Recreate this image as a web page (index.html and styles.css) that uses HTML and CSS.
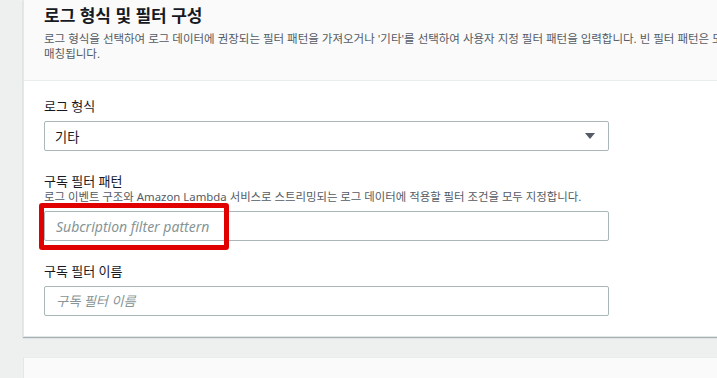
FILE: index.html
```html
<!DOCTYPE html>
<html lang="ko">
<head>
    <meta charset="UTF-8">
    <meta name="viewport" content="width=device-width, initial-scale=1.0">
    <title>로그 형식 및 필터 구성</title>
    <link rel="stylesheet" href="styles.css">
</head>
<body>
    <div class="page">
        <!-- 로그 형식 및 필터 구성 -->
        <div class="card">
            <div class="card-header">
                <h2>로그 형식 및 필터 구성</h2>
                <p class="desc">로그 형식을 선택하여 로그 데이터에 권장되는 필터 패턴을 가져오거나 '기타'를 선택하여 사용자 지정 필터 패턴을 입력합니다. 빈 필터 패턴은 모든 로그 이벤트와 매칭됩니다.</p>
            </div>
            <div class="card-body">
                <div class="form-group">
                    <label for="log-format">로그 형식</label>
                    <div class="select" id="log-format">
                        <span>기타</span>
                        <span class="caret"></span>
                    </div>
                </div>

                <div class="form-group">
                    <label for="filter-pattern">구독 필터 패턴</label>
                    <p class="hint">로그 이벤트 구조와 Amazon Lambda 서비스로 스트리밍되는 로그 데이터에 적용할 필터 조건을 모두 지정합니다.</p>
                    <div class="field">
                        <input type="text" class="pattern" id="filter-pattern" placeholder="Subcription filter pattern">
                        <div class="highlight"></div>
                    </div>
                </div>

                <div class="form-group">
                    <label for="filter-name">구독 필터 이름</label>
                    <input type="text" id="filter-name" placeholder="구독 필터 이름">
                </div>
            </div>
        </div>

        <div class="card next"></div>
    </div>
</body>
</html>
```

FILE: styles.css
```css
/* 기본 */
body {
    margin: 0;
    padding: 0;
    background-color: #eef0f0;
    font-family: "Noto Sans", "Noto Sans CJK KR", sans-serif;
    color: #16191f;
    overflow: hidden;
}

.page {
    padding-left: 23px;
    margin-right: -120px;
}

/* 카드 */
.card {
    background-color: #fff;
    border: 1px solid #e4e7e8;
    border-top: none;
    box-shadow: 0 1px 1px rgba(0, 28, 36, 0.3);
}

.card-header {
    background-color: #fafafa;
    border-bottom: 1px solid #eaeded;
    padding: 5px 20px 19px;
}

.card-header h2 {
    margin: 0;
    font-size: 17px;
    line-height: 22px;
    font-weight: 700;
}

.desc {
    margin: 4px 0 0;
    width: 780px;
    font-size: 11.5px;
    line-height: 15px;
    color: #545b64;
    word-break: keep-all;
}

.card-body {
    padding: 16px 20px 20px;
}

/* 폼 */
.form-group {
    width: 565px;
}

.form-group + .form-group {
    margin-top: 21px;
}

label {
    display: block;
    font-size: 13px;
    line-height: 18px;
    margin-bottom: 6px;
}

.hint {
    margin: -6px 0 7px;
    font-size: 11.4px;
    line-height: 14px;
    color: #545b64;
    white-space: nowrap;
}

.select,
input[type="text"] {
    box-sizing: border-box;
    width: 100%;
    height: 30px;
    border: 1px solid #aab7b8;
    border-radius: 2px;
    background-color: #fff;
    font-family: inherit;
    font-size: 13.2px;
    color: #16191f;
}

.select {
    display: flex;
    align-items: center;
    justify-content: space-between;
    padding: 0 13px 0 10px;
}

.caret {
    width: 0;
    height: 0;
    border-left: 5px solid transparent;
    border-right: 5px solid transparent;
    border-top: 6px solid #545b64;
}

input[type="text"] {
    display: block;
    padding: 0 11px;
    outline: none;
}

input.pattern {
    font-size: 14px;
}

input::placeholder {
    color: #879596;
    font-style: italic;
}

/* 강조 표시 */
.field {
    position: relative;
}

.highlight {
    position: absolute;
    left: -5px;
    top: -8px;
    width: 190px;
    height: 47px;
    box-sizing: border-box;
    border: 5px solid #e00000;
    border-radius: 3px;
    pointer-events: none;
}

.next {
    margin-top: 20px;
    height: 40px;
    background-color: #fafafa;
    border-top: 1px solid #eaeded;
    box-shadow: none;
}
```
